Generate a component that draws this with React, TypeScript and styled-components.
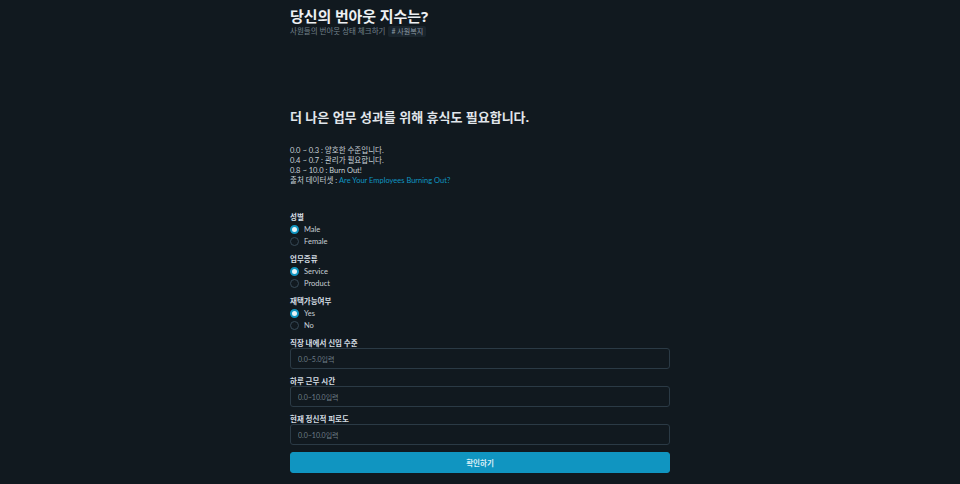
import React from "react";
import styled, { createGlobalStyle } from "styled-components";

const Global = createGlobalStyle`
  html, body { margin: 0; padding: 0; background: #11191f; }
  body {
    font-family: "Lato", "Noto Sans CJK KR", sans-serif;
    color: #bbc6ce;
    -webkit-font-smoothing: antialiased;
  }
  * { box-sizing: border-box; }
`;

const Main = styled.main`
  width: 380px;
  margin: 0 auto;
  padding-top: 7px;
  display: flex;
  flex-direction: column;
`;

const Title = styled.h1`
  margin: 0;
  font-family: "Noto Sans", "Noto Sans CJK KR", sans-serif;
  font-size: 15px;
  line-height: 18px;
  font-weight: 700;
  color: #edf0f3;
  letter-spacing: -0.1px;
`;

const Sub = styled.p`
  margin: 1px 0 0;
  font-size: 7.5px;
  line-height: 11px;
  color: #73828c;
  display: flex;
  align-items: center;
  gap: 3px;
`;

const Tag = styled.span`
  background: #1a252d;
  border-radius: 2px;
  padding: 0 3px;
  font-size: 7px;
  color: #8d9ba5;
  line-height: 11px;
`;

const Heading = styled.h2`
  margin: 72px 0 0;
  font-family: "Noto Sans", "Noto Sans CJK KR", sans-serif;
  font-size: 13px;
  line-height: 16px;
  font-weight: 700;
  color: #e1e6eb;
`;

const Info = styled.div`
  margin-top: 21px;
  font-size: 7.5px;
  line-height: 10px;
  color: #c8d0d6;
`;

const Link = styled.a`
  color: #1095c1;
  text-decoration: none;
`;

const Form = styled.form`
  margin-top: 24px;
  display: flex;
  flex-direction: column;
`;

const Group = styled.div`
  margin: 0 0 5px;
  display: flex;
  flex-direction: column;
`;

const Legend = styled.div`
  height: 10px;
  font-size: 7.5px;
  line-height: 10px;
  font-weight: 700;
  color: #d5dde3;
  margin-top: 3px;
`;

const RadioRow = styled.label`
  display: flex;
  align-items: center;
  gap: 5px;
  height: 12px;
  font-size: 7.5px;
  color: #c8d0d6;
`;

const Radio = styled.span<{ $checked?: boolean }>`
  width: 9px;
  height: 9px;
  border-radius: 50%;
  flex: none;
  background: ${(p) => (p.$checked ? "#e8f4f8" : "#11191f")};
  border: ${(p) => (p.$checked ? "2.5px solid #1095c1" : "1px solid #374956")};
`;

const Fields = styled.div`
  display: flex;
  flex-direction: column;
  gap: 7px;
  margin-top: 2px;
`;

const Field = styled.div`
  display: flex;
  flex-direction: column;
`;

const FieldLabel = styled.div`
  height: 10px;
  font-size: 7.5px;
  line-height: 12px;
  font-weight: 700;
  color: #d5dde3;
`;

const Input = styled.input`
  margin: 0;
  height: 21px;
  width: 100%;
  background: #11191f;
  border: 1px solid #2b3a45;
  border-radius: 3px;
  padding: 0 7px;
  font-family: inherit;
  font-size: 7px;
  color: #bbc6ce;
  outline: none;
  &::placeholder { color: #6f7e88; }
`;

const Button = styled.button`
  margin: 0;
  height: 21px;
  width: 100%;
  background: #1095c1;
  border: 1px solid #1095c1;
  border-radius: 3px;
  color: #d8eef6;
  font-family: inherit;
  font-size: 7.5px;
  font-weight: 700;
`;

const radios = [
  { legend: "성별", opts: ["Male", "Female"] },
  { legend: "업무종류", opts: ["Service", "Product"] },
  { legend: "재택가능여부", opts: ["Yes", "No"] },
];

const fields = [
  { label: "직장 내에서 신입 수준", ph: "0.0~5.0입력" },
  { label: "하루 근무 시간", ph: "0.0~10.0입력" },
  { label: "현재 정신적 피로도", ph: "0.0~10.0입력" },
];

export default function App() {
  return (
    <>
      <Global />
      <Main>
        <header>
          <Title>당신의 번아웃 지수는?</Title>
          <Sub>
            사원들의 번아웃 상태 체크하기 <Tag># 사원복지</Tag>
          </Sub>
        </header>
        <Heading>더 나은 업무 성과를 위해 휴식도 필요합니다.</Heading>
        <Info>
          <div>0.0 ~ 0.3 : 양호한 수준입니다.</div>
          <div>0.4 ~ 0.7 : 관리가 필요합니다.</div>
          <div>0.8 ~ 10.0 : Burn Out!</div>
          <div>
            출처 데이터셋 : <Link href="#">Are Your Employees Burning Out?</Link>
          </div>
        </Info>
        <Form onSubmit={(e) => e.preventDefault()}>
          {radios.map((g) => (
            <Group key={g.legend}>
              <Legend>{g.legend}</Legend>
              {g.opts.map((o, i) => (
                <RadioRow key={o}>
                  <Radio $checked={i === 0} />
                  {o}
                </RadioRow>
              ))}
            </Group>
          ))}
          <Fields>
            {fields.map((f) => (
              <Field key={f.label}>
                <FieldLabel>{f.label}</FieldLabel>
                <Input placeholder={f.ph} />
              </Field>
            ))}
            <Button type="submit">확인하기</Button>
          </Fields>
        </Form>
      </Main>
    </>
  );
}
